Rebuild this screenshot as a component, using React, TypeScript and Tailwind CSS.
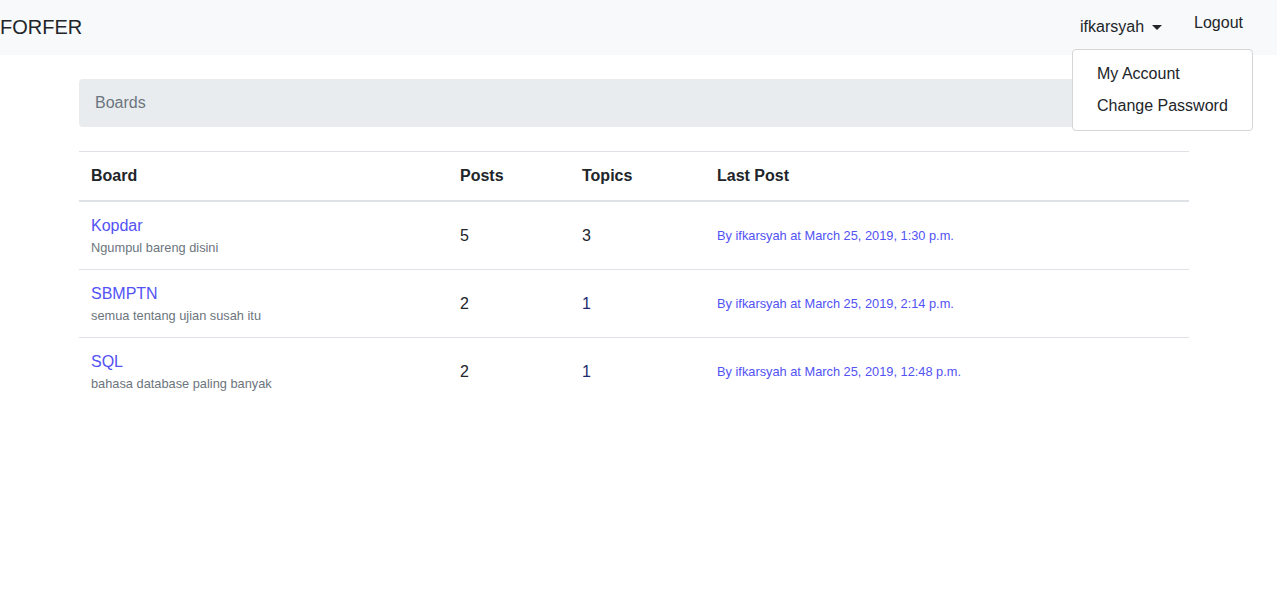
import React from 'react';

type Board = {
  name: string;
  description: string;
  posts: number;
  topics: number;
  lastPost: string;
};

const boards: Board[] = [
  { name: 'Kopdar', description: 'Ngumpul bareng disini', posts: 5, topics: 3, lastPost: 'March 25, 2019, 1:30 p.m.' },
  { name: 'SBMPTN', description: 'semua tentang ujian susah itu', posts: 2, topics: 1, lastPost: 'March 25, 2019, 2:14 p.m.' },
  { name: 'SQL', description: 'bahasa database paling banyak', posts: 2, topics: 1, lastPost: 'March 25, 2019, 12:48 p.m.' },
];

const Navbar = () => (
  <nav className="h-[55px] bg-[#f8f9fa] flex items-center justify-between">
    <a className="text-[20px] leading-[30px] text-[#212529] mb-[2px]">FORFER</a>
    <div className="flex items-center mr-[34px]">
      <div className="relative mb-[2px]">
        <button className="flex items-center text-[16px] leading-6 text-[#212529]">
          ifkarsyah
          <span className="ml-[8px] mt-[1px] w-0 h-0 border-t-[5px] border-t-[#212529] border-x-[5px] border-x-transparent" />
        </button>
        <div className="absolute left-[-8px] top-[34px] w-[181px] bg-white border border-[#d5d5d5] rounded py-2 z-10">
          <a className="block px-6 py-1 text-[16px] leading-6 text-[#212529]">My Account</a>
          <a className="block px-6 py-1 text-[16px] leading-6 text-[#212529]">Change Password</a>
        </div>
      </div>
      <a className="ml-[32px] text-[16px] leading-6 text-[#212529] mb-[10px]">Logout</a>
    </div>
  </nav>
);

export default function App() {
  return (
    <div className="min-h-screen bg-white" style={{ fontFamily: '"Liberation Sans", Arial, sans-serif' }}>
      <Navbar />
      <main className="w-[1110px] ml-[79px] pt-6">
        <div className="bg-[#e9ecef] rounded px-4 py-3 text-[16px] leading-6 text-[#6c757d]">Boards</div>
        <div className="mt-6 border-t border-[#dee2e6] text-[#212529]">
          <div className="grid grid-cols-[369px_122px_135px_1fr] border-b-2 border-[#dee2e6] font-bold text-[16px] leading-6">
            <div className="p-3">Board</div>
            <div className="p-3">Posts</div>
            <div className="p-3">Topics</div>
            <div className="p-3">Last Post</div>
          </div>
          {boards.map((b, i) => (
            <div
              key={b.name}
              className={`grid grid-cols-[369px_122px_135px_1fr] items-center ${i < boards.length - 1 ? 'border-b border-[#dee2e6]' : ''}`}
            >
              <div className="p-3">
                <a className="block text-[16px] leading-6 text-[#5252f5]">{b.name}</a>
                <div className="text-[12.8px] leading-[19px] text-[#6c757d]">{b.description}</div>
              </div>
              <div className="p-3 text-[16px] leading-6">{b.posts}</div>
              <div className={`p-3 text-[16px] leading-6 ${b.topics === 1 ? 'text-[#1f2a6e]' : ''}`}>{b.topics}</div>
              <div className="p-3 text-[12.8px] leading-[19px] text-[#5252f5]">
                By ifkarsyah at {b.lastPost}
              </div>
            </div>
          ))}
        </div>
      </main>
    </div>
  );
}
